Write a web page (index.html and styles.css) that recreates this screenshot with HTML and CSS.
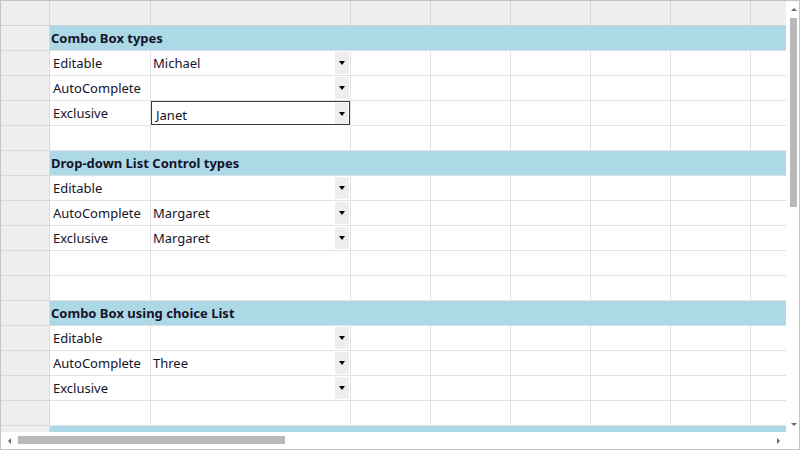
FILE: index.html
```html
<!DOCTYPE html>
<html>
<head>
<meta charset="utf-8">
<link rel="stylesheet" href="styles.css">
</head>
<body>
<div class="frame">
  <div class="top">
    <div class="viewport">
      <div class="row head">
        <div class="rh"></div>
        <div class="c a"></div><div class="c b"></div>
        <div class="c n"></div><div class="c n"></div><div class="c n"></div><div class="c n"></div><div class="c n"></div><div class="c n"></div>
      </div>

      <div class="row band"><div class="rh"></div><div class="bc">Combo Box types</div></div>
      <div class="row">
        <div class="rh"></div>
        <div class="c a">Editable</div>
        <div class="c b">Michael<span class="dd"><i></i></span></div>
        <div class="c n"></div><div class="c n"></div><div class="c n"></div><div class="c n"></div><div class="c n"></div><div class="c n"></div>
      </div>
      <div class="row">
        <div class="rh"></div>
        <div class="c a">AutoComplete</div>
        <div class="c b"><span class="dd"><i></i></span></div>
        <div class="c n"></div><div class="c n"></div><div class="c n"></div><div class="c n"></div><div class="c n"></div><div class="c n"></div>
      </div>
      <div class="row">
        <div class="rh"></div>
        <div class="c a">Exclusive</div>
        <div class="c b edit">Janet<span class="dd"><i></i></span></div>
        <div class="c n"></div><div class="c n"></div><div class="c n"></div><div class="c n"></div><div class="c n"></div><div class="c n"></div>
      </div>
      <div class="row">
        <div class="rh"></div>
        <div class="c a"></div><div class="c b"></div>
        <div class="c n"></div><div class="c n"></div><div class="c n"></div><div class="c n"></div><div class="c n"></div><div class="c n"></div>
      </div>

      <div class="row band"><div class="rh"></div><div class="bc">Drop-down List Control types</div></div>
      <div class="row">
        <div class="rh"></div>
        <div class="c a">Editable</div>
        <div class="c b"><span class="dd"><i></i></span></div>
        <div class="c n"></div><div class="c n"></div><div class="c n"></div><div class="c n"></div><div class="c n"></div><div class="c n"></div>
      </div>
      <div class="row">
        <div class="rh"></div>
        <div class="c a">AutoComplete</div>
        <div class="c b">Margaret<span class="dd"><i></i></span></div>
        <div class="c n"></div><div class="c n"></div><div class="c n"></div><div class="c n"></div><div class="c n"></div><div class="c n"></div>
      </div>
      <div class="row">
        <div class="rh"></div>
        <div class="c a">Exclusive</div>
        <div class="c b">Margaret<span class="dd"><i></i></span></div>
        <div class="c n"></div><div class="c n"></div><div class="c n"></div><div class="c n"></div><div class="c n"></div><div class="c n"></div>
      </div>
      <div class="row">
        <div class="rh"></div>
        <div class="c a"></div><div class="c b"></div>
        <div class="c n"></div><div class="c n"></div><div class="c n"></div><div class="c n"></div><div class="c n"></div><div class="c n"></div>
      </div>
      <div class="row">
        <div class="rh"></div>
        <div class="c a"></div><div class="c b"></div>
        <div class="c n"></div><div class="c n"></div><div class="c n"></div><div class="c n"></div><div class="c n"></div><div class="c n"></div>
      </div>

      <div class="row band"><div class="rh"></div><div class="bc">Combo Box using choice List</div></div>
      <div class="row">
        <div class="rh"></div>
        <div class="c a">Editable</div>
        <div class="c b"><span class="dd"><i></i></span></div>
        <div class="c n"></div><div class="c n"></div><div class="c n"></div><div class="c n"></div><div class="c n"></div><div class="c n"></div>
      </div>
      <div class="row">
        <div class="rh"></div>
        <div class="c a">AutoComplete</div>
        <div class="c b">Three<span class="dd"><i></i></span></div>
        <div class="c n"></div><div class="c n"></div><div class="c n"></div><div class="c n"></div><div class="c n"></div><div class="c n"></div>
      </div>
      <div class="row">
        <div class="rh"></div>
        <div class="c a">Exclusive</div>
        <div class="c b"><span class="dd"><i></i></span></div>
        <div class="c n"></div><div class="c n"></div><div class="c n"></div><div class="c n"></div><div class="c n"></div><div class="c n"></div>
      </div>
      <div class="row">
        <div class="rh"></div>
        <div class="c a"></div><div class="c b"></div>
        <div class="c n"></div><div class="c n"></div><div class="c n"></div><div class="c n"></div><div class="c n"></div><div class="c n"></div>
      </div>

      <div class="row band"><div class="rh"></div><div class="bc"></div></div>
    </div>
    <div class="vscroll">
      <div class="arr"><span class="up"></span></div>
      <div class="vtrack"><div class="vthumb"></div></div>
      <div class="arr"><span class="down"></span></div>
    </div>
  </div>
  <div class="bottom">
    <div class="hscroll">
      <div class="harr"><span class="left"></span></div>
      <div class="htrack"><div class="hthumb"></div></div>
      <div class="harr"><span class="right"></span></div>
    </div>
    <div class="corner"></div>
  </div>
</div>
</body>
</html>
```

FILE: styles.css
```css
html, body {
  margin: 0;
  padding: 0;
  background: #ffffff;
}

.frame {
  width: 800px;
  height: 450px;
  box-sizing: border-box;
  border: 1px solid #c4c4c4;
  display: flex;
  flex-direction: column;
  font-family: "Noto Sans", "Open Sans", sans-serif;
  font-size: 13px;
  color: #14142a;
}

.top {
  display: flex;
  height: 431px;
}

.viewport {
  width: 785px;
  height: 431px;
  overflow: hidden;
}

.row {
  display: flex;
  height: 25px;
  width: 1000px;
}

.row.head {
  height: 25px;
  background: #efefef;
}

.rh {
  flex: none;
  width: 49px;
  box-sizing: border-box;
  background: #efefef;
  border-right: 1px solid #dadada;
  border-bottom: 1px solid #dadada;
}

.c {
  flex: none;
  position: relative;
  box-sizing: border-box;
  border-right: 1px solid #e3e3e3;
  border-bottom: 1px solid #e3e3e3;
  line-height: 24px;
  padding-left: 2px;
  white-space: nowrap;
}

.head .c {
  border-right-color: #dadada;
  border-bottom-color: #d0d0d0;
}
.head .rh {
  border-bottom-color: #d0d0d0;
}

.a { width: 101px; padding-left: 3px; }
.b { width: 200px; }
.n { width: 80px; }

.band .bc {
  flex: 1;
  background: #add8e6;
  font-weight: bold;
  line-height: 24px;
  padding-left: 1px;
  box-sizing: border-box;
  border-bottom: 1px solid #d6e2e6;
  white-space: nowrap;
}

.dd {
  position: absolute;
  right: 1px;
  top: 1px;
  width: 14px;
  height: 22px;
  background: #eeeeee;
  display: flex;
  align-items: center;
  justify-content: center;
}

.dd i {
  display: block;
  width: 0;
  height: 0;
  border-left: 3.5px solid transparent;
  border-right: 3.5px solid transparent;
  border-top: 4px solid #000;
}

.edit {
  box-shadow: inset 0 0 0 1px #3a3a3a;
  border-bottom-color: transparent;
  padding-left: 5px;
  line-height: 28px;
}
.edit .dd {
  top: 2px;
  right: 2px;
  height: 21px;
  width: 13px;
}

.vscroll {
  width: 13px;
  height: 431px;
  display: flex;
  flex-direction: column;
  background: #ffffff;
}

.arr {
  height: 16px;
  display: flex;
  align-items: center;
  justify-content: flex-end;
  padding-right: 2px;
}

.vtrack {
  flex: 1;
  padding: 1px 1px 0 4px;
}

.vthumb {
  width: 7px;
  height: 189px;
  background: #b9b9b9;
}

.up {
  width: 0; height: 0;
  border-left: 3px solid transparent;
  border-right: 3px solid transparent;
  border-bottom: 3px solid #6a6a6a;
}
.down {
  width: 0; height: 0;
  border-left: 3px solid transparent;
  border-right: 3px solid transparent;
  border-top: 3px solid #6a6a6a;
}

.bottom {
  display: flex;
  height: 17px;
}

.hscroll {
  width: 785px;
  display: flex;
  align-items: stretch;
}

.harr {
  width: 16px;
  display: flex;
  align-items: center;
  justify-content: center;
}

.htrack {
  flex: 1;
  padding: 4px 0 0 1px;
}

.hthumb {
  width: 267px;
  height: 8px;
  background: #b9b9b9;
}

.left {
  width: 0; height: 0;
  border-top: 3px solid transparent;
  border-bottom: 3px solid transparent;
  border-right: 3px solid #6a6a6a;
}
.right {
  width: 0; height: 0;
  border-top: 3px solid transparent;
  border-bottom: 3px solid transparent;
  border-left: 3px solid #6a6a6a;
}

.corner {
  width: 13px;
}
```
